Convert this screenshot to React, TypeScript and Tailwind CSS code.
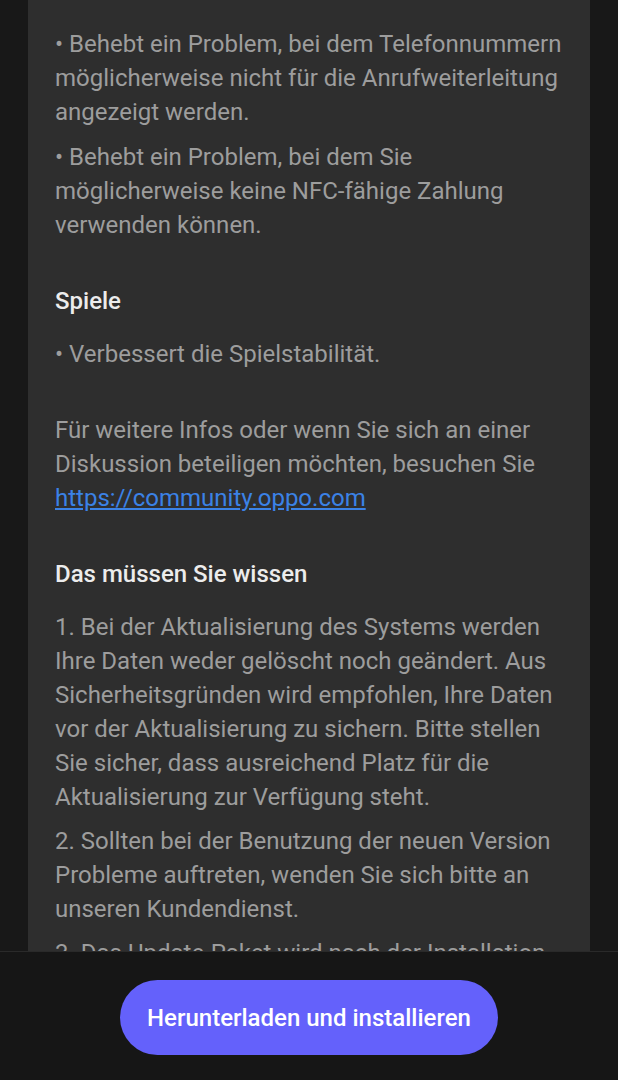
const bugfixes = [
  '• Behebt ein Problem, bei dem Telefonnummern möglicherweise nicht für die Anrufweiterleitung angezeigt werden.',
  '• Behebt ein Problem, bei dem Sie möglicherweise keine NFC-fähige Zahlung verwenden können.',
];

const notes = [
  '1. Bei der Aktualisierung des Systems werden Ihre Daten weder gelöscht noch geändert. Aus Sicherheitsgründen wird empfohlen, Ihre Daten vor der Aktualisierung zu sichern. Bitte stellen Sie sicher, dass ausreichend Platz für die Aktualisierung zur Verfügung steht.',
  '2. Sollten bei der Benutzung der neuen Version Probleme auftreten, wenden Sie sich bitte an unseren Kundendienst.',
  '3. Das Update-Paket wird nach der Installation automatisch gelöscht, um Speicherplatz freizugeben.',
];

export default function App() {
  return (
    <div
      className="flex h-screen flex-col overflow-hidden bg-[#181818]"
      style={{ fontFamily: 'Roboto, "Noto Sans", sans-serif' }}
    >
      {/* Changelog card */}
      <div className="min-h-0 flex-1 overflow-hidden px-[28px]">
        <div className="bg-[#2e2e2e] px-[27px] pt-[27px] pb-10 text-[24px] leading-[34px] text-[#9d9d9d]">
          <div className="flex flex-col gap-[11px]">
            {bugfixes.map((t) => (
              <p key={t}>{t}</p>
            ))}
          </div>

          <h3 className="mt-[42px] font-medium text-[#ececec]">Spiele</h3>
          <p className="mt-[19px]">• Verbessert die Spielstabilität.</p>

          <p className="mt-[42px]">
            Für weitere Infos oder wenn Sie sich an einer Diskussion beteiligen möchten, besuchen Sie{' '}
            <a href="#" className="text-[#3b82e6] underline underline-offset-2">
              https://community.oppo.com
            </a>
          </p>

          <h3 className="mt-[42px] font-medium text-[#ececec]">Das müssen Sie wissen</h3>
          <div className="mt-[19px] flex flex-col gap-[10px]">
            {notes.map((t) => (
              <p key={t}>{t}</p>
            ))}
          </div>
        </div>
      </div>

      {/* Bottom action bar */}
      <div className="flex h-[129px] shrink-0 justify-center border-t border-[#2a2a2a] bg-[#161616] pt-[28px]">
        <button className="h-[75px] w-[378px] rounded-full bg-[#6461fb] text-[24px] font-medium text-white">
          Herunterladen und installieren
        </button>
      </div>
    </div>
  );
}
